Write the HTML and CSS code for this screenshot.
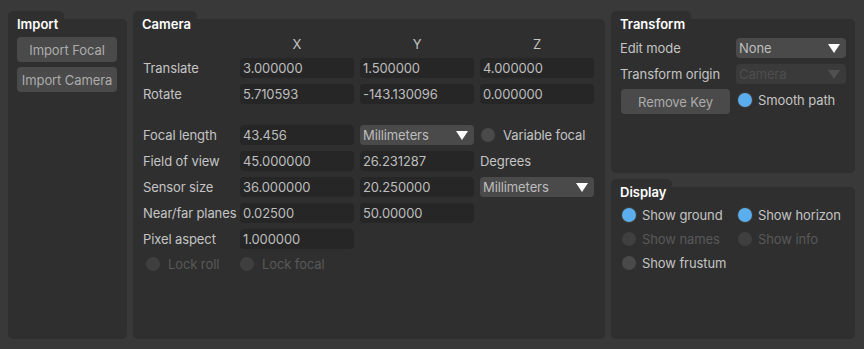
FILE: index.html
```html
<!DOCTYPE html>
<html>
<head>
<meta charset="utf-8">
<link rel="stylesheet" href="styles.css">
</head>
<body>
<div class="app">
  <section class="group g-import">
    <div class="tab">Import</div>
    <div class="body">
      <div class="btns">
        <div class="btn">Import Focal</div>
        <div class="btn">Import Camera</div>
      </div>
    </div>
  </section>

  <section class="group g-camera">
    <div class="tab">Camera</div>
    <div class="body">
      <div class="grid vec">
        <div></div><div class="hdr">X</div><div class="hdr">Y</div><div class="hdr">Z</div>
        <div class="lbl">Translate</div><div class="field">3.000000</div><div class="field">1.500000</div><div class="field">4.000000</div>
        <div class="lbl">Rotate</div><div class="field">5.710593</div><div class="field">-143.130096</div><div class="field">0.000000</div>
      </div>
      <div class="grid params">
        <div class="lbl">Focal length</div><div class="field">43.456</div>
        <div class="select">Millimeters<span class="tri"></span></div>
        <div class="radio-item"><span class="radio"></span>Variable focal</div>

        <div class="lbl">Field of view</div><div class="field">45.000000</div><div class="field">26.231287</div><div class="lbl">Degrees</div>

        <div class="lbl">Sensor size</div><div class="field">36.000000</div><div class="field">20.250000</div>
        <div class="select">Millimeters<span class="tri"></span></div>

        <div class="lbl">Near/far planes</div><div class="field">0.02500</div><div class="field">50.00000</div><div></div>

        <div class="lbl">Pixel aspect</div><div class="field">1.000000</div><div></div><div></div>

        <div class="radio-item disabled lock-roll"><span class="radio"></span>Lock roll</div>
        <div class="radio-item disabled lock-focal"><span class="radio"></span>Lock focal</div>
      </div>
    </div>
  </section>

  <div class="col-right">
    <section class="group g-transform">
      <div class="tab">Transform</div>
      <div class="body">
        <div class="grid two">
          <div class="lbl">Edit mode</div>
          <div class="select">None<span class="tri"></span></div>
          <div class="lbl">Transform origin</div>
          <div class="select disabled">Camera<span class="tri"></span></div>
          <div class="btn remove">Remove Key</div>
          <div class="radio-item"><span class="radio on"></span>Smooth path</div>
        </div>
      </div>
    </section>
    <section class="group g-display">
      <div class="tab">Display</div>
      <div class="body">
        <div class="grid two display">
          <div class="radio-item"><span class="radio on"></span>Show ground</div>
          <div class="radio-item"><span class="radio on"></span>Show horizon</div>
          <div class="radio-item disabled"><span class="radio"></span>Show names</div>
          <div class="radio-item disabled"><span class="radio"></span>Show info</div>
          <div class="radio-item"><span class="radio"></span>Show frustum</div>
        </div>
      </div>
    </section>
  </div>
</div>
</body>
</html>
```

FILE: styles.css
```css
* { box-sizing: border-box; }
html, body {
  margin: 0;
  height: 100%;
  background: #393939;
}
body {
  font-family: Inter, "Liberation Sans", sans-serif;
  font-size: 13px;
  letter-spacing: -0.1px;
  color: #c4c4c4;
}
.app {
  display: flex;
  gap: 6px;
  height: 349px;
  padding: 11px 9px 10px 8px;
}
.group {
  display: flex;
  flex-direction: column;
}
.g-import { width: 119px; }
.g-camera { width: 472px; }
.col-right {
  width: 244px;
  display: flex;
  flex-direction: column;
  gap: 6px;
}
.g-transform { height: 162px; }
.g-display { flex: 1; }

.tab {
  position: relative;
  z-index: 1;
  align-self: flex-start;
  height: 8px;
  padding: 5px 6px 0 9px;
  background: #2f2f2f;
  border-radius: 5px 5px 0 0;
  font-weight: 600;
  line-height: 16px;
  color: #ffffff;
  letter-spacing: 0;
  white-space: nowrap;
}
.body {
  flex: 1;
  background: #2f2f2f;
  border-radius: 0 5px 5px 5px;
  padding: 13px 9px 0 9px;
}

.btn {
  height: 25px;
  border-radius: 4px;
  background: #4a4a4a;
  color: #acacac;
  display: flex;
  align-items: center;
  justify-content: center;
}
.btns {
  display: flex;
  flex-direction: column;
  gap: 5px;
  margin-top: 5px;
  width: 100px;
}

.grid { display: grid; column-gap: 6px; }
.g-camera .grid { grid-template-columns: 91px 114px 114px 114px; }
.g-camera .body { padding-left: 10px; }
.vec {
  margin-top: 5px;
  grid-template-rows: 15px 20px 20px;
  row-gap: 6px;
}
.params {
  margin-top: 21px;
  grid-auto-rows: 20px;
  row-gap: 6px;
}
.hdr {
  text-align: center;
  line-height: 15px;
  color: #c4c4c4;
}
.lbl {
  line-height: 20px;
  white-space: nowrap;
}
.field {
  background: #262626;
  border-radius: 4px;
  color: #bdbdbd;
  line-height: 20px;
  padding-left: 3px;
}
.select {
  position: relative;
  background: #4a4a4a;
  border-radius: 4px;
  color: #bdbdbd;
  line-height: 20px;
  padding-left: 3px;
}
.select.disabled {
  background: #3a3a3a;
  color: #4e4e4e;
}
.tri {
  position: absolute;
  right: 6px;
  top: 6px;
  width: 0;
  height: 0;
  border-left: 6px solid transparent;
  border-right: 6px solid transparent;
  border-top: 9px solid #ffffff;
}
.select.disabled .tri { border-top-color: #505050; }

.radio-item {
  display: flex;
  align-items: center;
  gap: 8px;
  height: 20px;
  white-space: nowrap;
}
.radio {
  width: 14px;
  height: 14px;
  border-radius: 50%;
  background: #4a4a4a;
  flex: none;
}
.radio.on {
  background: #5aaeee;
  box-shadow: 0 0 0 1px #3e3a36;
}
.radio-item.disabled { color: #595959; }
.radio-item.disabled .radio { background: #3f3f3f; }
.params .radio-item:not(.lock-roll):not(.lock-focal) .radio { margin-left: 1px; }
.lock-roll { margin-left: 3px; margin-top: -1px; }
.lock-focal { margin-top: -1px; }

.g-transform .body, .g-display .body { padding-left: 9px; }
.two {
  grid-template-columns: 110px 110px;
  row-gap: 6px;
  margin-top: 6px;
}
.two .radio { margin-left: 2px; }
.two .radio-item { gap: 6px; }
.remove {
  margin-left: 1px;
  width: 109px;
  margin-top: -1px;
}
.display {
  margin-top: 5px;
  row-gap: 4px;
}
```
